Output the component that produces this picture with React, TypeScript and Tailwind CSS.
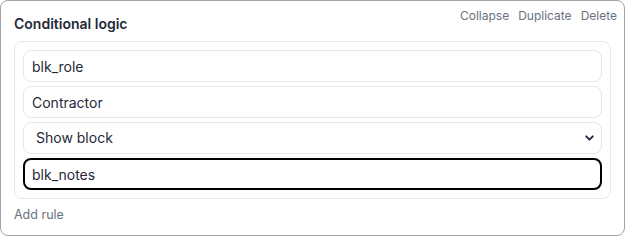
import { ChevronDown } from "lucide-react";

const inputBase =
  "h-8 w-full rounded-lg border border-[#e5e7eb] bg-white px-2 text-sm text-[#1f2937] outline-none";

export default function App() {
  return (
    <div className="min-h-screen bg-white font-['Inter',sans-serif]">
      <div className="flex h-[236px] w-[625px] flex-col rounded-lg border border-[#a1a1aa] px-[13px] pt-[11px]">
        <div className="flex h-5 items-start justify-between">
          <h3 className="mt-[2px] text-sm font-semibold leading-5 text-[#1f2937]">Conditional logic</h3>
          <div className="-mr-[6px] -mt-[4px] flex gap-[9px] text-xs leading-4 text-[#6b7280]">
            <button>Collapse</button>
            <button>Duplicate</button>
            <button>Delete</button>
          </div>
        </div>

        <div className="mt-[9px] flex flex-col gap-1 rounded-lg border border-[#e5e7eb] p-2">
          <input className={inputBase} defaultValue="blk_role" />
          <input className={inputBase} defaultValue="Contractor" />
          <div className="relative">
            <select className={`${inputBase} appearance-none pl-3`} defaultValue="show">
              <option value="show">Show block</option>
              <option value="hide">Hide block</option>
            </select>
            <ChevronDown
              className="pointer-events-none absolute right-[6px] top-1/2 -translate-y-1/2 text-[#1e293b]"
              size={13}
              strokeWidth={3.5}
            />
          </div>
          <input
            className="h-8 w-full rounded-lg border-2 border-black bg-white px-[7px] text-sm text-[#1f2937] outline-none"
            defaultValue="blk_notes"
          />
        </div>

        <button className="mt-[7px] self-start text-[12.5px] text-[#6b7280]">Add rule</button>
      </div>
    </div>
  );
}
